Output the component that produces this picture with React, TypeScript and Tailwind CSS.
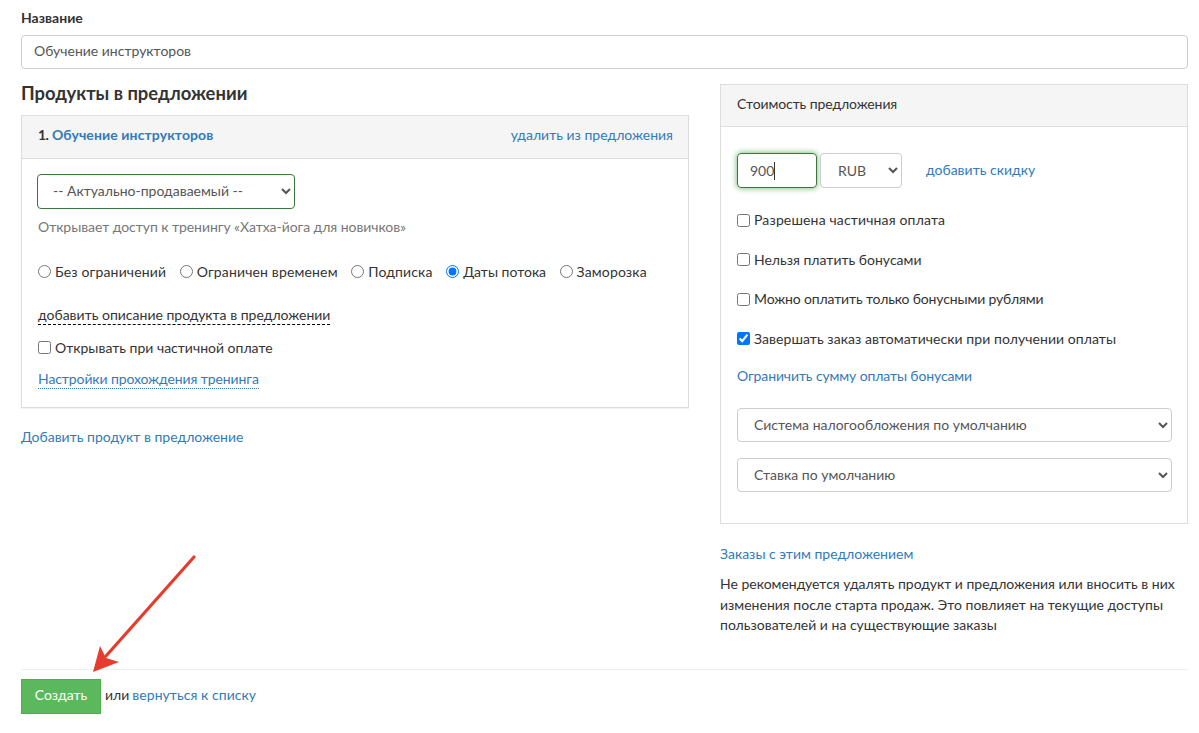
import React from "react";

const link = "text-[#337ab7]";

function Radio({ label, checked, wide }: { label: string; checked?: boolean; wide?: boolean }) {
  return (
    <label className={`flex items-center ${wide ? "tracking-[0.15px]" : ""}`}>
      <input type="radio" name="access" defaultChecked={checked} className="m-0 mr-[4px] w-[13px] h-[13px] -translate-y-[1px]" />
      <span>{label}</span>
    </label>
  );
}

function Check({ label, checked, className = "", textClass = "-translate-y-[1px]" }: { label: string; checked?: boolean; className?: string; textClass?: string }) {
  return (
    <label className={`flex items-center h-[20px] ${className}`}>
      <input type="checkbox" defaultChecked={checked} className="m-0 mr-[4px] w-[13px] h-[13px] -translate-y-[1px]" />
      <span className={textClass}>{label}</span>
    </label>
  );
}

export default function App() {
  return (
    <div className="relative w-[1199px] h-[733px] overflow-hidden bg-white text-[14px] leading-[20px] text-[#555] font-['Lato','Open_Sans',sans-serif] pl-[21px] pr-[11px] pt-[8px]">
      <div className="font-bold text-[#333] h-[20px]">Название</div>
      <input
        readOnly
        value="Обучение инструкторов"
        className="mt-[7px] block w-full h-[34px] border border-[#ccc] rounded-[4px] px-[12px] pb-[3px] text-[#555] outline-none"
      />
      <div className="flex gap-[31px] mt-[15px]">
        <div className="w-[668px] shrink-0">
          <h3 className="text-[18.4px] leading-[20px] font-bold text-[#333] -mt-[1px] h-[20px]">Продукты в предложении</h3>
          <div className="mt-[12px] border border-[#ddd] shadow-[0_1px_1px_rgba(0,0,0,0.05)]">
            <div className="h-[43px] bg-[#f5f5f5] border-b border-[#ddd] flex items-center justify-between pl-[16px] pr-[15px] pb-[4px]">
              <div className="font-bold text-[#333] flex">
                <span className="tracking-[-0.5px] mr-[3.5px]">1.</span>
                <span className={`${link} tracking-[0.1px]`}>Обучение инструкторов</span>
              </div>
              <a className={link}>удалить из предложения</a>
            </div>
            <div className="px-[16px] pt-[15px] pb-[17px] h-[248px]">
              <select className="block -ml-[1px] w-[258px] h-[35px] border border-[#3c763d] rounded-[4px] pl-[11px] pr-[8px] pb-[3px] bg-white text-[#555]">
                <option>-- Актуально-продаваемый --</option>
              </select>
              <div className="mt-[8px] text-[#777] tracking-[-0.06px]">Открывает доступ к тренингу «Хатха-йога для новичков»</div>
              <div className="mt-[25px] flex gap-[13.5px] text-[#333]">
                <Radio label="Без ограничений" wide />
                <Radio label="Ограничен временем" wide />
                <Radio label="Подписка" wide />
                <Radio label="Даты потока" checked />
                <Radio label="Заморозка" wide />
              </div>
              <div className="mt-[23px]">
                <span className="inline-block text-[#333] leading-[19px] border-b border-dashed border-black">
                  добавить описание продукта в предложении
                </span>
              </div>
              <div className="mt-[13px] text-[#333]">
                <Check label="Открывать при частичной оплате" textClass="" />
              </div>
              <div className="mt-[11px]">
                <a className={`inline-block ${link} tracking-[-0.1px] leading-[19px] border-b border-dotted border-[#337ab7]`}>Настройки прохождения тренинга</a>
              </div>
            </div>
          </div>
          <a className={`block mt-[19px] ${link}`}>Добавить продукт в предложение</a>
        </div>

        <div className="flex-1 min-w-0">
          <div className="border border-[#ddd] h-[440px]">
            <div className="h-[42px] bg-[#f5f5f5] border-b border-[#ddd] flex items-center pl-[16px] pb-[3px] text-[#333] tracking-[-0.1px]">Стоимость предложения</div>
            <div className="pl-[16px] pr-[15px] pt-[26px]">
              <div className="flex items-center">
                <div className="w-[80px] h-[35px] border border-[#3c763d] rounded-[4px] pl-[12px] flex items-center text-[#555] shadow-[0_0_6px_#67b168]">
                  900<span className="w-px h-[18px] bg-[#333]" />
                </div>
                <select className="ml-[3px] w-[82px] h-[35px] border border-[#ccc] rounded-[4px] pl-[13px] bg-white text-[#555]">
                  <option>RUB</option>
                </select>
                <a className={`ml-[24px] -translate-y-[1px] ${link}`}>добавить скидку</a>
              </div>
              <div className="mt-[23px] flex flex-col gap-[19.5px] text-[#333]">
                <Check label="Разрешена частичная оплата" className="tracking-[0.15px]" />
                <Check label="Нельзя платить бонусами" />
                <Check label="Можно оплатить только бонусными рублями" className="tracking-[-0.15px]" />
                <Check label="Завершать заказ автоматически при получении оплаты" checked className="tracking-[0.06px]" />
              </div>
              <a className={`block mt-[16px] tracking-[-0.12px] ${link}`}>Ограничить сумму оплаты бонусами</a>
              <select className="block mt-[22px] w-full h-[34px] border border-[#ccc] rounded-[4px] pl-[12px] pb-[1px] bg-white text-[#555]">
                <option>Система налогообложения по умолчанию</option>
              </select>
              <select className="block mt-[16px] w-full h-[34px] border border-[#ccc] rounded-[4px] pl-[12px] pb-[1px] bg-white text-[#555]">
                <option>Ставка по умолчанию</option>
              </select>
            </div>
          </div>
          <a className={`block mt-[20px] ${link}`}>Заказы с этим предложением</a>
          <p className="mt-[10px] text-[#333] leading-[20.5px]">
            Не рекомендуется удалять продукт и предложения или вносить в них изменения после старта продаж. Это повлияет на текущие доступы пользователей и на существующие заказы
          </p>
        </div>
      </div>
      <div className="mt-[33px] border-t border-[#eee] pt-[9px] flex items-center">
        <button className="w-[80px] h-[35px] pb-[2px] bg-[#5cb85c] border border-[#4cae4c] text-white">Создать</button>
        <span className="ml-[4px] -translate-y-[1px] text-[#333]">или</span>
        <a className={`ml-[3px] -translate-y-[1px] tracking-[0.05px] ${link}`}>вернуться к списку</a>
      </div>
      <svg className="absolute left-0 top-[540px] pointer-events-none" width="300" height="193" viewBox="0 0 300 193">
        <line x1="194" y1="17" x2="106" y2="116" stroke="#e63c2e" strokeWidth="3.2" strokeLinecap="round" />
        <polygon points="93,132 100,106 106,118 119,122" fill="#e63c2e" />
      </svg>
    </div>
  );
}
